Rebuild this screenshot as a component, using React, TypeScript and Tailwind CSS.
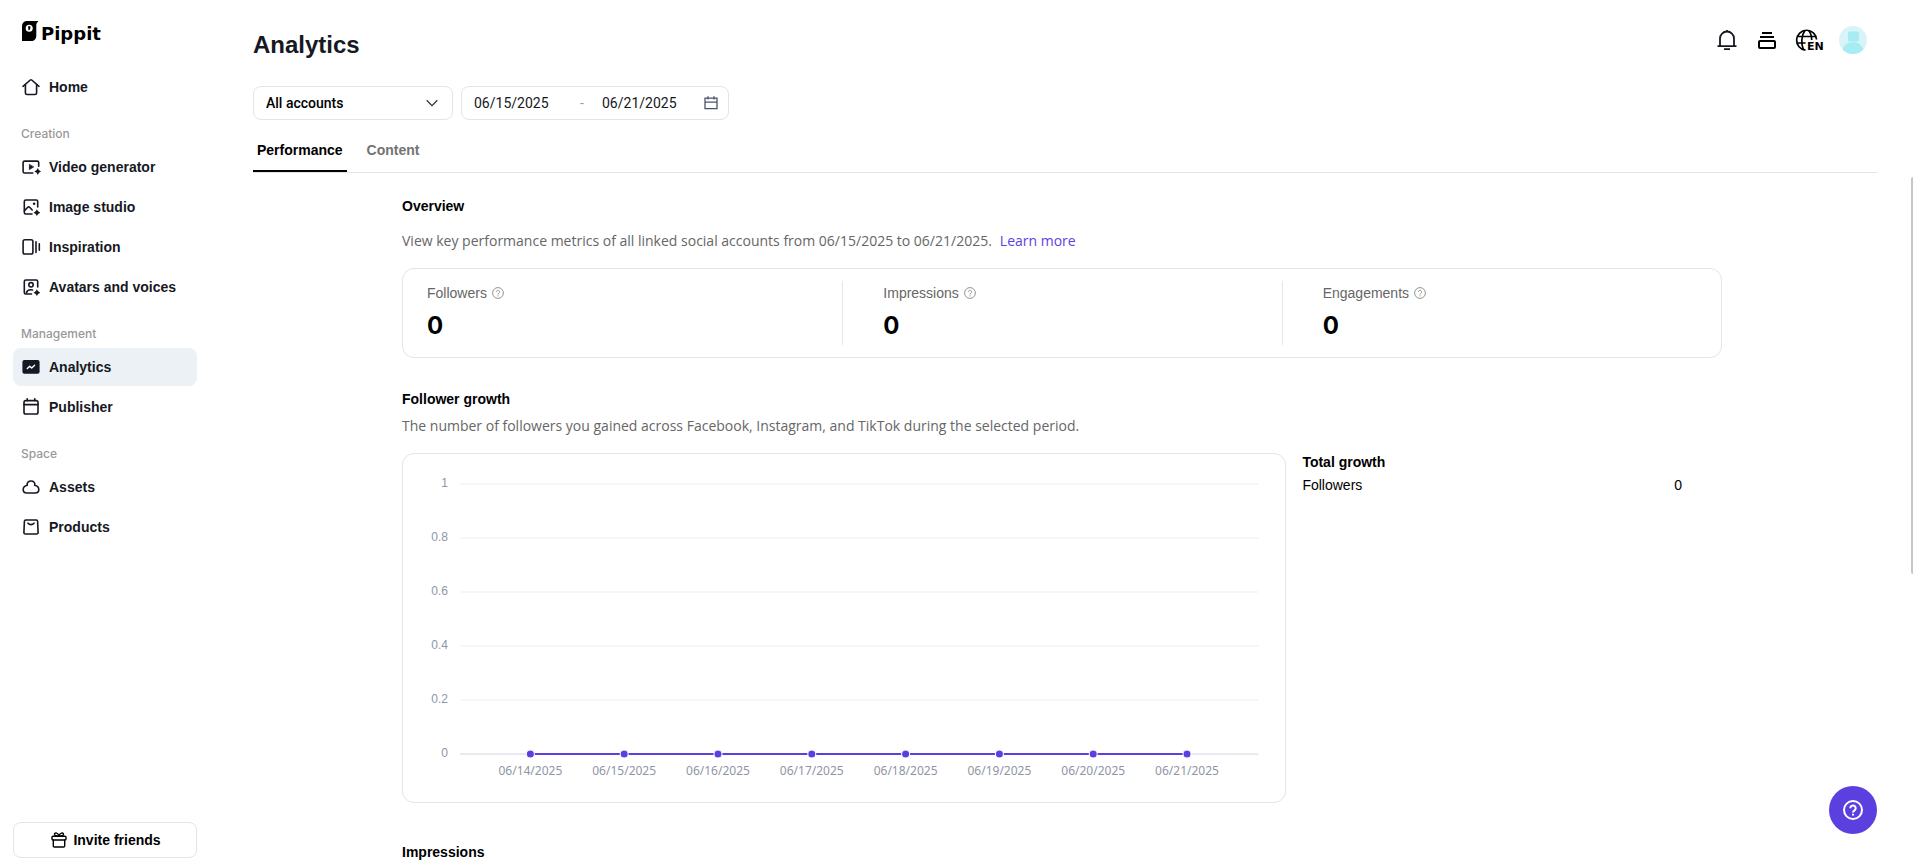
import type { ReactNode } from 'react';

const dates = [
  '06/14/2025',
  '06/15/2025',
  '06/16/2025',
  '06/17/2025',
  '06/18/2025',
  '06/19/2025',
  '06/20/2025',
  '06/21/2025',
];

const Icon = ({ children }: { children: ReactNode }) => (
  <svg
    className="size-5 shrink-0"
    viewBox="0 0 20 20"
    fill="none"
    stroke="currentColor"
    strokeWidth="1.6"
    strokeLinecap="round"
    strokeLinejoin="round"
    aria-hidden="true"
  >
    {children}
  </svg>
);

const Sparkle = ({ x, y }: { x: number; y: number }) => (
  <path
    d="M0 -3.4 Q.7 -.7 3.4 0 Q.7 .7 0 3.4 Q-.7 .7 -3.4 0 Q-.7 -.7 0 -3.4Z"
    transform={`translate(${x} ${y})`}
    fill="currentColor"
    stroke="none"
  />
);

const HomeIcon = () => (
  <Icon>
    <path d="M2 9.3 9.3 3a1.1 1.1 0 0 1 1.4 0L18 9.3" />
    <path d="M4.4 7.6v8.3a1.6 1.6 0 0 0 1.6 1.6h8a1.6 1.6 0 0 0 1.6-1.6V7.6" />
  </Icon>
);

const VideoIcon = () => (
  <Icon>
    <path d="M11.8 16H3.6A1.5 1.5 0 0 1 2.1 14.5V5.6A1.5 1.5 0 0 1 3.6 4.1H16.2A1.5 1.5 0 0 1 17.7 5.6V9.3" />
    <path d="M8.4 7.7v4.8l4-2.4z" fill="currentColor" strokeWidth=".8" />
    <Sparkle x={16.8} y={14.5} />
  </Icon>
);

const ImageIcon = () => (
  <Icon>
    <path d="M11 17H4.8A1.5 1.5 0 0 1 3.3 15.5V4.5A1.5 1.5 0 0 1 4.8 3H15.2A1.5 1.5 0 0 1 16.7 4.5V10" />
    <path d="m3.5 13.6 3.3-3.3a1.3 1.3 0 0 1 1.8 0l2.6 2.7" />
    <circle cx="13.1" cy="6.8" r="1.3" fill="currentColor" stroke="none" />
    <Sparkle x={15.9} y={15.7} />
  </Icon>
);

const InspirationIcon = () => (
  <Icon>
    <rect x="2.1" y="2.8" width="9.8" height="14.2" rx="1.8" />
    <path d="M15 4.8v10.6M18.3 6.8v6.4" />
  </Icon>
);

const AvatarIcon = () => (
  <Icon>
    <path d="M10.5 17H4.8A1.5 1.5 0 0 1 3.3 15.5V4.5A1.5 1.5 0 0 1 4.8 3H15.2A1.5 1.5 0 0 1 16.7 4.5V10" />
    <circle cx="10" cy="7.8" r="2.2" />
    <path d="M5.5 15.8c.6-2.3 2.8-3.5 6-2.8" />
    <Sparkle x={15.9} y={15.7} />
  </Icon>
);

const AnalyticsIcon = () => (
  <Icon>
    <rect x="1.4" y="3" width="17.2" height="13.8" rx="2" fill="currentColor" stroke="none" />
    <path d="m6.3 11.6 2.5-2.4 1.9 1.7 2.9-2.7" stroke="white" strokeWidth="1.4" />
  </Icon>
);

const PublisherIcon = () => (
  <Icon>
    <rect x="3" y="3.6" width="14" height="13.4" rx="1.8" />
    <path d="M3 7.6h14M6.2 1.8v1.8M13.8 1.8v1.8" />
  </Icon>
);

const AssetsIcon = () => (
  <Icon>
    <path d="M6.3 8.3C5.6 5.8 7.4 4 10 4s4.4 1.8 3.7 4.3c2.4.6 4.1 2 4.1 4.2 0 2-1.5 3.5-3.6 3.5H5.8c-2.1 0-3.6-1.5-3.6-3.5 0-2.2 1.7-3.6 4.1-4.2z" />
  </Icon>
);

const ProductsIcon = () => (
  <Icon>
    <path d="M4.7 3h10.6a1.3 1.3 0 0 1 1.3 1.2l.5 11.3a1.4 1.4 0 0 1-1.4 1.5H4.3a1.4 1.4 0 0 1-1.4-1.5l.5-11.3A1.3 1.3 0 0 1 4.7 3z" />
    <path d="M7 6.2c1.6 1.9 4.4 1.9 6 0" />
  </Icon>
);

const GiftIcon = () => (
  <svg
    className="size-4"
    viewBox="0 0 16 16"
    fill="none"
    stroke="currentColor"
    strokeWidth="1.4"
    strokeLinejoin="round"
    strokeLinecap="round"
    aria-hidden="true"
  >
    <rect x="1" y="4.2" width="14" height="3.8" rx="1" />
    <path d="M2.3 8v6a1 1 0 0 0 1 1h9.4a1 1 0 0 0 1-1V8M8 4.2C5 4.2 3.2 3.5 3.5 2 3.9.4 7.2.4 8 4.2 8.8.4 12.1.4 12.5 2c.3 1.5-1.5 2.2-4.5 2.2" />
  </svg>
);

const HelpIcon = ({ className }: { className: string }) => (
  <svg className={className} viewBox="0 0 20 20" fill="none" stroke="currentColor" aria-hidden="true">
    <circle cx="10" cy="10" r="9" />
    <path d="M7.3 8.2a2.7 2.7 0 1 1 4.4 2.1c-1 .8-1.7 1.1-1.7 2.2" />
    <path d="M10 13.8v1.7" />
  </svg>
);

const sections = [
  { title: '', items: [{ label: 'Home', icon: HomeIcon }] },
  {
    title: 'Creation',
    items: [
      { label: 'Video generator', icon: VideoIcon },
      { label: 'Image studio', icon: ImageIcon },
      { label: 'Inspiration', icon: InspirationIcon },
      { label: 'Avatars and voices', icon: AvatarIcon },
    ],
  },
  {
    title: 'Management',
    items: [
      { label: 'Analytics', icon: AnalyticsIcon, active: true },
      { label: 'Publisher', icon: PublisherIcon },
    ],
  },
  {
    title: 'Space',
    items: [
      { label: 'Assets', icon: AssetsIcon },
      { label: 'Products', icon: ProductsIcon },
    ],
  },
];

const Sidebar = () => (
  <aside className="flex w-[210px] shrink-0 flex-col pr-[13px] pb-[7px] pl-[13px]">
    <a href="#" className="flex h-[67px] items-start gap-0.5 pt-5 pl-2">
      <svg className="h-[22px] w-[18px]" viewBox="0 0 18 22" aria-hidden="true">
        <path d="M1 6.5C1 3 3 1 6.5 1H17.3L15.3 4V15.5C15.3 19 13.5 21 10 21H1Z" fill="black" />
        <circle cx="8.2" cy="8.2" r="3.5" fill="white" />
        <path d="M7 6.3h2.4v1.5c0 1.4-.8 2.2-1.8 2.6z" fill="black" />
      </svg>
      <span className="font-['DejaVu_Sans',sans-serif] text-lg leading-7 font-bold text-black">Pippit</span>
    </a>
    <nav>
      {sections.map((section) => (
        <div key={section.title}>
          {section.title && (
            <h2 className="flex h-10 items-end pb-[3px] pl-2 font-[Inter,sans-serif] text-xs leading-5 font-medium text-[#999999]">
              {section.title}
            </h2>
          )}
          {section.items.map(({ label, icon: ItemIcon, active }: any) => (
            <div key={label} className="py-px">
              <a
                href="#"
                className={`flex h-[38px] items-center gap-2 rounded-lg px-2 font-semibold ${active ? 'bg-[#ebf1f4]' : ''}`}
              >
                <ItemIcon />
                {label}
              </a>
            </div>
          ))}
        </div>
      ))}
    </nav>
    <button className="mt-auto flex h-9 items-center justify-center gap-1.5 rounded-lg border border-[#e4e4e6] pl-0.5 font-semibold text-black">
      <GiftIcon />
      Invite friends
    </button>
  </aside>
);

const HeaderActions = () => (
  <div className="flex items-center gap-4 pt-1.5 pr-2.5">
    <button aria-label="Notifications">
      <svg className="size-6" viewBox="0 0 24 24" fill="none" stroke="currentColor" strokeWidth="1.8">
        <path d="M2.5 18.2h19M5 18V10.5a7 7 0 0 1 14 0V18M9 21.2h6M12 2v2" />
      </svg>
    </button>
    <button aria-label="Tasks">
      <svg className="size-6" viewBox="0 0 24 24" fill="none" stroke="black" strokeWidth="2">
        <path d="M7 5h10M5 9h14" />
        <rect x="4" y="13" width="16" height="7" rx="1" />
      </svg>
    </button>
    <button aria-label="Language" className="-mr-0.5">
      <svg className="h-6 w-[30px]" viewBox="0 0 30 24" fill="none" stroke="black" strokeWidth="1.7">
        <path d="M10.5 22.2A10 10 0 1 1 21.6 11.5" />
        <path d="M2 8.5h19.500M2 15h8.500M8.500 22C6 16 6 8 10 2.300M13.500 2.300c2.500 3 3.300 6.200 3.200 9.700" />
        <text x="12" y="22" fill="black" stroke="none" fontSize="11" fontWeight="700" fontFamily="DejaVu Sans, sans-serif">
          EN
        </text>
      </svg>
    </button>
    <button aria-label="Account">
      <svg className="size-7" viewBox="0 0 28 28">
        <defs>
          <clipPath id="avatar">
            <circle cx="14" cy="14" r="14" />
          </clipPath>
        </defs>
        <g clipPath="url(#avatar)">
          <rect width="28" height="28" fill="#d9f4f8" />
          <path d="M9 5.5h10l1.2 1.5v2.8l-.7 1 .7 1V14L19 15.5H9z" fill="#a5ecf3" />
          <circle cx="14" cy="27" r="11" fill="#a5ecf3" />
        </g>
      </svg>
    </button>
  </div>
);

const Filters = () => (
  <div className="flex gap-2 font-[Roboto,sans-serif]">
    <div className="relative h-[34px] w-[200px]">
      <select
        aria-label="Accounts"
        className="h-full w-full appearance-none rounded-lg border border-[#e4e4e6] bg-white px-3 font-medium text-black"
      >
        <option>All accounts</option>
      </select>
      <svg
        className="pointer-events-none absolute top-[11px] right-[15px] size-3"
        viewBox="0 0 12 12"
        fill="none"
        stroke="#333333"
        strokeWidth="1.3"
      >
        <path d="m.7 3.3 5.3 5.3 5.3-5.3" />
      </svg>
    </div>
    <div className="flex h-[34px] w-[268px] items-center rounded-lg border border-[#e4e4e6] pr-[9px] pl-3">
      <input aria-label="Start date" defaultValue={dates[1]} className="w-[100px] min-w-0" />
      <span className="w-7 pl-1.5 text-[#9a9fac]">-</span>
      <input aria-label="End date" defaultValue={dates[7]} className="w-[100px] min-w-0" />
      <svg className="ml-auto size-4" viewBox="0 0 16 16" fill="none" stroke="#4b5468" strokeWidth="1.3" aria-hidden="true">
        <path d="M2 3.2h12v10.5H2zM2 7.2h12M5 1.2v3.3M11 1.2v3.3" />
      </svg>
    </div>
  </div>
);

const metrics = ['Followers', 'Impressions', 'Engagements'];

const Overview = () => (
  <section>
    <h2 className="font-bold text-black">Overview</h2>
    <p className="mt-[15px] font-['Open_Sans',sans-serif] text-[#666666]">
      View key performance metrics of all linked social accounts from 06/15/2025 to 06/21/2025.
      <a href="#" className="ml-2 text-[#5c3fdf]">Learn more</a>
    </p>
    <div className="mt-[17px] grid h-[90px] grid-cols-3 rounded-xl border border-[#e4e4e6] py-3">
      {metrics.map((metric, i) => (
        <div key={metric} className={i === 0 ? 'pl-6' : 'border-l border-[#e8e8ea] pl-10'}>
          <div className="flex items-center gap-[5px] pt-0.5 text-[#666666]">
            {metric}
            <HelpIcon className="size-3 stroke-[#888888] stroke-[1.5]" />
          </div>
          <div className="mt-[5px] font-[Inter,sans-serif] text-2xl leading-9 font-bold text-black">0</div>
        </div>
      ))}
    </div>
  </section>
);

const GrowthChart = () => (
  <svg className="w-full" viewBox="0 0 882 348" role="img" aria-label="Follower growth" fontSize="12" fill="#8f95a5">
    {['1', '0.8', '0.6', '0.4', '0.2', '0'].map((tick, i) => (
      <g key={tick}>
        <rect x="57" y={29 + i * 54} width="798" height="2" fill={tick === '0' ? '#e8e8ef' : '#f7f7f9'} />
        <text x="45" y={33 + i * 54} textAnchor="end">
          {tick}
        </text>
      </g>
    ))}
    <path d="M127.3 300H783.7" stroke="#5c3fdf" strokeWidth="2" />
    {dates.map((date, i) => (
      <g key={date}>
        <circle cx={127.3 + i * 93.77} cy="300" r="4" fill="#5c3fdf" stroke="white" />
        <text x={127.3 + i * 93.77} y="321" textAnchor="middle" fontFamily="Noto Sans, sans-serif">
          {date}
        </text>
      </g>
    ))}
  </svg>
);

const App = () => {
  return (
    <div className="relative flex h-screen overflow-hidden bg-white font-['Liberation_Sans',Arial,sans-serif] text-sm leading-5 text-[#161823]">
      <Sidebar />
      <main className="min-w-0 flex-1 pr-9 pl-[43px]">
        <header className="flex h-[86px] items-start justify-between pt-5">
          <h1 className="pt-[7px] text-2xl leading-9 font-bold">Analytics</h1>
          <HeaderActions />
        </header>
        <Filters />
        <div className="mt-4 flex h-[37px] gap-4 border-b border-[#e4e4e6]">
          <button className="h-9 border-b-2 border-black px-1 pb-1.5 font-semibold text-black">Performance</button>
          <button className="h-9 border-b-2 border-transparent px-1 pb-1.5 font-semibold text-[#737373]">Content</button>
        </div>
        <div className="pt-[23px] pr-1.5">
          <div className="mx-auto max-w-[1320px]">
            <Overview />
            <section className="mt-[31px]">
              <h2 className="font-bold text-black">Follower growth</h2>
              <p className="mt-[7px] font-['Open_Sans',sans-serif] text-[#666666]">
                The number of followers you gained across Facebook, Instagram, and TikTok during the selected period.
              </p>
              <div className="mt-4 flex items-start gap-4">
                <div className="mt-px w-[67%] rounded-xl border border-[#e4e4e6]">
                  <GrowthChart />
                </div>
                <div className="flex-1 pr-10 text-black">
                  <h3 className="font-semibold">Total growth</h3>
                  <div className="mt-[3px] flex justify-between">
                    <span>Followers</span>
                    <span>0</span>
                  </div>
                </div>
              </div>
            </section>
            <section className="mt-[39px]">
              <h2 className="font-bold text-black">Impressions</h2>
            </section>
          </div>
        </div>
      </main>
      <button
        aria-label="Help"
        className="absolute right-9 bottom-[31px] flex size-12 items-center justify-center rounded-full bg-[#5c3fdf] text-white"
      >
        <HelpIcon className="size-5 stroke-2" />
      </button>
      <div className="absolute top-[177px] right-0 h-[397px] w-0.5 rounded-l bg-[#c6c6c6]" />
    </div>
  );
};

export default App;
